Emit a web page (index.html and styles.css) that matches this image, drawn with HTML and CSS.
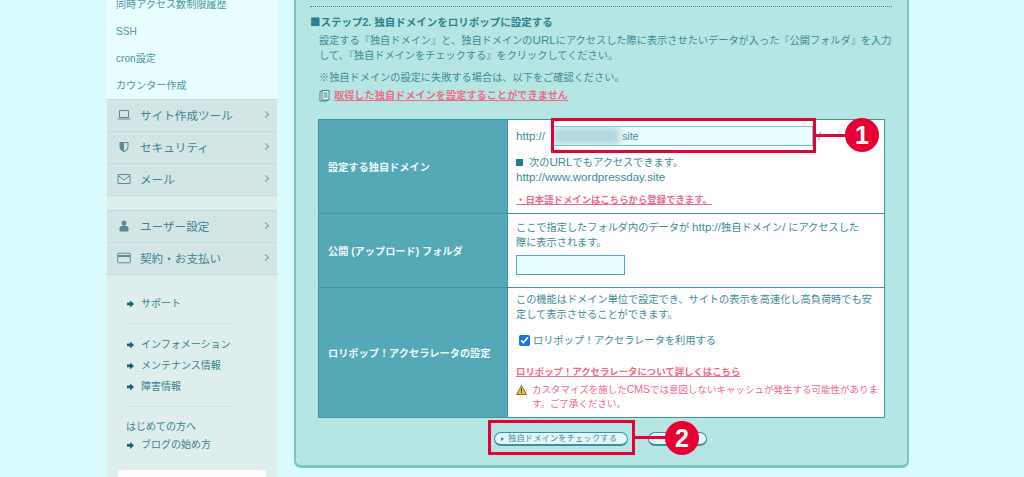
FILE: index.html
```html
<!DOCTYPE html>
<html lang="ja">
<head>
<meta charset="utf-8">
<title>独自ドメイン設定</title>
<link rel="stylesheet" href="styles.css">
</head>
<body>
<div class="page">
  <aside class="side">
    <ul class="sub">
      <li>同時アクセス数制限履歴</li>
      <li>SSH</li>
      <li>cron設定</li>
      <li>カウンター作成</li>
    </ul>
    <div class="cat">
      <svg class="ico" viewBox="0 0 14 12"><path d="M2.500 1.500h9v7h-9z" fill="none" stroke="#5b8a94" stroke-width="1"/><path d="M0.500 9.500h13v1h-13z" fill="#5b8a94"/></svg>
      <span>サイト作成ツール</span><i class="chev"></i>
    </div>
    <div class="cat">
      <svg class="ico" viewBox="0 0 14 12"><path d="M2.500 1h9v5c0 2.500-2 4-4.500 5C4.500 10 2.500 8.500 2.500 6z" fill="#5b8a94"/><path d="M7 2v8c2-1 3.500-2 3.500-4V2z" fill="#cfe6e4"/></svg>
      <span>セキュリティ</span><i class="chev"></i>
    </div>
    <div class="cat">
      <svg class="ico" viewBox="0 0 14 12"><path d="M1 1.500h12v9H1z" fill="none" stroke="#5b8a94"/><path d="M1 2.500l6 4.500 6-4.500" fill="none" stroke="#5b8a94"/></svg>
      <span>メール</span><i class="chev"></i>
    </div>
    <div class="gap"></div>
    <div class="cat">
      <svg class="ico" viewBox="0 0 14 12"><circle cx="7" cy="3" r="2.500" fill="#5b8a94"/><path d="M2.500 11.500V8c0-1.500 1.500-2.500 4.500-2.500s4.500 1 4.500 2.500v3.500z" fill="#5b8a94"/></svg>
      <span>ユーザー設定</span><i class="chev"></i>
    </div>
    <div class="cat">
      <svg class="ico" viewBox="0 0 14 12"><rect x="0.700" y="1.200" width="12.600" height="9.600" rx="1" fill="none" stroke="#5b8a94"/><rect x="1" y="3" width="12" height="2" fill="#5b8a94"/></svg>
      <span>契約・お支払い</span><i class="chev"></i>
    </div>
    <div class="lower">
      <ul class="links"><li class="arrow">サポート</li></ul>
      <hr class="dash">
      <ul class="links">
        <li class="arrow">インフォメーション</li>
        <li class="arrow">メンテナンス情報</li>
        <li class="arrow">障害情報</li>
      </ul>
      <hr class="dash">
      <ul class="links tight">
        <li>はじめての方へ</li>
        <li class="arrow">ブログの始め方</li>
      </ul>
      <div class="whitebox"></div>
    </div>
  </aside>

  <main class="panel">
    <h2 class="step"><span class="cjk">■</span>ステップ2. 独自ドメインをロリポップに設定する</h2>
    <p class="lead">設定する『独自ドメイン』と、独自ドメインの<span class="lat">URL</span>にアクセスした際に表示させたいデータが入った『公開フォルダ』を入力<br>して、『独自ドメインをチェックする』をクリックしてください。</p>
    <p class="lead note">※独自ドメインの設定に失敗する場合は、以下をご確認ください。</p>
    <p class="lead notelink">
      <svg class="doc" viewBox="0 0 11 12"><path d="M1 1.500h7v9.500H1z" fill="#eef9f8" stroke="#3f7f88"/><path d="M3 0.500h7v9.500H3z" fill="#eef9f8" stroke="#3f7f88"/><path d="M4.500 3h4M4.500 5h4M4.500 7h4" stroke="#3f7f88"/></svg>
      <a class="pink bold">取得した独自ドメインを設定することができません</a>
    </p>

    <table class="form">
      <tr class="r1">
        <th>設定する独自ドメイン</th>
        <td>
          <div class="urlrow"><span class="lat">http://</span><span class="field"><span class="blur"></span><span class="site lat">site</span></span><span class="slash">/</span></div>
          <p class="also"><span class="sq"></span>次の<span class="lat">URL</span>でもアクセスできます。<br><span class="lat">http://www.wordpressday.site</span></p>
          <a class="pink bold small">・日本語ドメインはこちらから登録できます。</a>
        </td>
      </tr>
      <tr class="r2">
        <th>公開 (アップロード) フォルダ</th>
        <td>
          <p class="cellp">ここで指定したフォルダ内のデータが <span class="lat">http://</span>独自ドメイン<span class="lat">/</span> にアクセスした<br>際に表示されます。</p>
          <div class="folder"></div>
        </td>
      </tr>
      <tr class="r3">
        <th>ロリポップ！アクセラレータの設定</th>
        <td>
          <p class="cellp tightp">この機能はドメイン単位で設定でき、サイトの表示を高速化し高負荷時でも安<br>定して表示させることができます。</p>
          <label class="chk"><input type="checkbox" checked>ロリポップ！アクセラレータを利用する</label>
          <a class="pink bold acc">ロリポップ！アクセラレータについて詳しくはこちら</a>
          <div class="warn">
            <svg class="tri" viewBox="0 0 12 11"><path d="M6 0.500l5.500 10H0.500z" fill="#f2c230" stroke="#4a4020" stroke-width="0.800"/><path d="M5.500 3.500h1v4h-1zM5.500 8h1v1.200h-1z" fill="#222"/></svg>
            <span>カスタマイズを施した<span class="cms">CMS</span>では意図しないキャッシュが発生する可能性がありま<br>す。ご了承ください。</span>
          </div>
        </td>
      </tr>
    </table>

    <div class="btns">
      <button class="btn primary" type="button"><i class="tip"></i>独自ドメインをチェックする</button>
      <button class="btn ghost" type="button"></button>
    </div>
  </main>
</div>

<div class="mark box1"></div>
<div class="mark line1"></div>
<div class="mark dot dot1">1</div>
<div class="mark box2"></div>
<div class="mark line2"></div>
<div class="mark dot dot2">2</div>
</body>
</html>
```
FILE: styles.css
```css
* { box-sizing: border-box; }
html, body { margin: 0; height: 477px; overflow: hidden; }
body {
  background: #d9fbfd;
  font-family: "Liberation Sans", "Noto Sans CJK JP", sans-serif;
  font-size: 10.2px;
  color: #3d8b98;
  position: relative;
}
ul { list-style: none; margin: 0; padding: 0; }
p { margin: 0; }
.lat { font-size: 11.6px; line-height: 1; }
.cjk { font-family: "Noto Sans CJK JP", sans-serif; }
.page { display: flex; align-items: flex-start; padding-left: 107px; }

/* sidebar */
.side { width: 170px; margin-top: -10px; height: 487px; background: #deeeec; flex: none; overflow: hidden; }
.sub { background: #e9fefe; padding-top: 1px; }
.sub li { height: 27.100px; line-height: 27px; padding-left: 9px; font-size: 10.100px; color: #4b96a4; }
.cat {
  height: 32px; display: flex; align-items: center; padding: 0 0 2px 10px;
  background: #d2e7e5; border-top: 1px solid #c2dedb;
  font-size: 11.600px; color: #3f8493;
}
.ico { width: 14px; height: 12px; flex: none; margin-right: 9px; }
.cat span { flex: 1; }
.chev { width: 5px; height: 5px; border-top: 1px solid #6d98a0; border-right: 1px solid #6d98a0; transform: rotate(45deg); margin-right: 9px; }
.gap { height: 15px; background: #deeeec; border-top: 1px solid #c2dedb; }
.lower { border-top: 1px solid #c2dedb; padding: 18px 0 0 19px; }
.links li { height: 21px; line-height: 21px; font-size: 10px; color: #3a7f8d; display: flex; align-items: center; }
.links.tight li { height: 18px; line-height: 18px; }
.links li.arrow::before {
  content: ""; width: 7px; height: 7px; flex: none; margin: 0 7px 0 1px; background: #0f6472;
  clip-path: polygon(0 30%, 45% 30%, 45% 0, 100% 50%, 45% 100%, 45% 70%, 0 70%);
}
.dash { width: 104px; margin: 9px 0 10px 1px; border: 0; border-top: 1px dotted #c5d9d7; height: 0; }
.links + .dash + .links.tight { margin-top: 11px; }
.whitebox { margin: 16px 0 0 -8px; width: 148px; height: 60px; background: #fff; border-radius: 3px 3px 0 0; }

/* main panel */
.panel {
  width: 615px; height: 468px; margin-left: 17px; flex: none;
  background: #b6e6e3; border: 2px solid #78c5c2; border-top: 0; border-bottom-width: 3px;
  border-radius: 0 0 7px 7px; padding: 6px 15px 0 14px;
}
.step {
  margin: 0; border-top: 1px dotted #3b8b97; padding-top: 8px;
  font-size: 10.500px; line-height: 14px; font-weight: 700; color: #2f7f8d;
}
.lead { margin-left: 9px; line-height: 15px; }
.step + .lead { margin-top: 4px; }
.note { margin-top: 7px; }
.notelink { margin-top: 3px; display: flex; align-items: center; }
.doc { width: 11px; height: 12px; margin-right: 4px; flex: none; }
.pink { color: #ef6a86; text-decoration: underline; }
.bold { font-weight: 700; }
.form {
  border-collapse: collapse; width: 567px; margin: 16px 0 0 8px; table-layout: fixed; background: #fff;
}
.form th {
  width: 189px; background: #55a8b6; color: #eefbfb; text-align: left; padding: 0 0 0 9px;
  border: 1px solid #3f95a4; font-size: 10.200px; font-weight: 700;
}
.form td { border: 1px solid #3f95a4; padding: 0 8px; vertical-align: top; line-height: 15px; }
.r1 { height: 94px; }
.r2 { height: 74px; }
.r3 { height: 130px; }
.urlrow { display: flex; align-items: center; height: 20px; margin-top: 6px; }
.field {
  width: 261px; height: 20px; margin-left: 7px; flex: none; background: #e9fefe; border: 1px solid #7cc0c8;
  display: flex; align-items: center; overflow: hidden;
}
.blur { width: 67px; height: 18px; background: #b5d8df; filter: blur(3px); flex: none; }
.site { margin-left: 2px; font-size: 10.600px; }
.slash { margin-left: 5px; }
.also { margin-top: 9px; display: block; }
.sq { display: inline-block; width: 7px; height: 7px; background: #1f7f8f; margin-right: 6px; }
.small { display: block; margin-top: 7px; font-size: 9.400px; }
.cellp { margin-top: 6px; }
.tightp { margin-top: 4px; }
.folder { width: 109px; height: 20px; margin-top: 5px; background: #e9fefe; border: 1px solid #55a8b6; }
.chk { display: flex; align-items: center; margin-top: 11px; height: 15px; }
.chk input { width: 11px; height: 11px; margin: 0 3px 0 3px; accent-color: #1a73e8; }
.acc { display: block; margin-top: 16px; font-size: 9.400px; }
.warn { display: flex; margin-top: 3px; color: #ef6a86; font-size: 9.500px; line-height: 14px; white-space: nowrap; }
.cms { font-size: 10.500px; }
.tri { width: 11px; height: 10px; margin: 3px 5px 0 0; flex: none; }
.btns { display: flex; gap: 20px; margin: 14px 0 0 184px; }
.btn {
  height: 14px; border-radius: 7px; padding: 0; background: #e3f6f8;
  border: 1px solid #3f8f9d; border-bottom-width: 2px; color: #3d8b98;
  font: 8.200px "Liberation Sans", "Noto Sans CJK JP", sans-serif; letter-spacing: 0.200px; line-height: 11px;
  display: flex; align-items: center; white-space: nowrap;
}
.primary { width: 134px; padding-left: 6px; }
.ghost { width: 59px; }
.tip { width: 0; height: 0; border-left: 3px solid #3d8b98; border-top: 2px solid transparent; border-bottom: 2px solid transparent; margin-right: 4px; }

/* annotations over the screenshot */
.mark { position: absolute; z-index: 5; }
.box1 { left: 551px; top: 118px; width: 265px; height: 35px; border: 3px solid #e60033; }
.line1 { left: 816px; top: 134px; width: 30px; height: 3px; background: #e60033; }
.box2 { left: 488px; top: 420px; width: 147px; height: 35px; border: 3px solid #e60033; }
.line2 { left: 635px; top: 436px; width: 32px; height: 3px; background: #e60033; }
.dot {
  width: 34px; height: 34px; border-radius: 50%; background: #e60033; color: #fff;
  font-size: 25px; font-weight: 700; display: flex; align-items: center; justify-content: center;
}
.dot1 { left: 845px; top: 118px; }
.dot2 { left: 665px; top: 421px; }
```
